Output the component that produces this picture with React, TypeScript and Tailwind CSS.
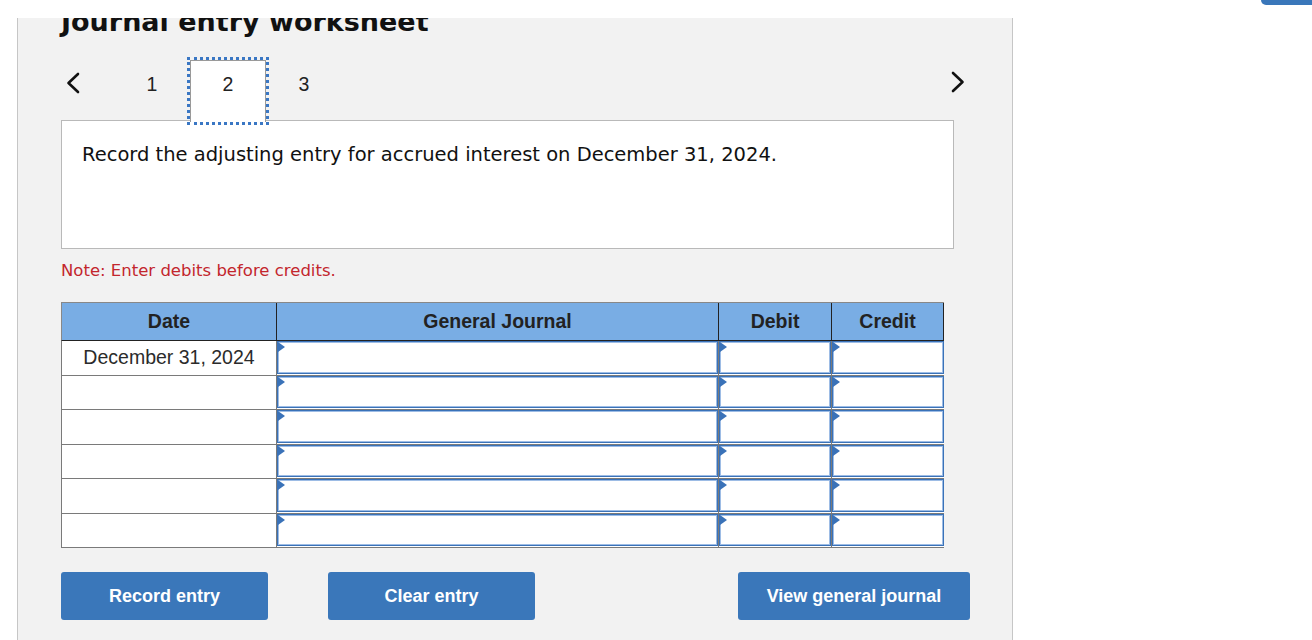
import React from 'react';

const rowHeights = ['h-[35px]', 'h-[34px]', 'h-[35px]', 'h-[34px]', 'h-[35px]', 'h-[34px]'];
const dates = ['December 31, 2024', '', '', '', '', ''];

function Chevron({ dir }: { dir: 'left' | 'right' }) {
  return (
    <svg width="14" height="22" viewBox="0 0 14 22" fill="none">
      <polyline
        points={dir === 'left' ? '12,2 2.5,11 12,20' : '2,2 11.5,11 2,20'}
        stroke="#111"
        strokeWidth="2.6"
        strokeLinecap="round"
        strokeLinejoin="round"
      />
    </svg>
  );
}

function EntryInput() {
  return (
    <div className="relative h-full w-full bg-white border border-[#3a72b8] shadow-[inset_0_0_0_1px_#9dbce5]">
      <div className="absolute top-0 left-0 w-0 h-0 border-y-[5px] border-y-transparent border-l-[7px] border-l-[#3a72b8]" />
    </div>
  );
}

export default function App() {
  return (
    <div className="h-[640px] w-[1312px] overflow-hidden bg-white flex items-start">
      <div className="pt-[18px] pl-[17px]">
        <div className="w-[996px] h-[700px] overflow-hidden bg-[#f2f2f2] border-x border-[#c6c6c6] pl-[43px]">
          <h2 className="-mt-[12px] h-[32px] leading-[32px] text-[27px] font-bold text-[#111] font-['DejaVu_Sans',sans-serif]">
            Journal entry worksheet
          </h2>

          {/* steps */}
          <div className="mt-[22px] flex items-start h-[62px] w-[904px] font-['Liberation_Sans',Arial,sans-serif] text-[19.5px] text-[#222]">
            <div className="w-[53px] pl-[5px] pt-[12px]">
              <Chevron dir="left" />
            </div>
            <div className="w-[76px] h-[62px] border border-transparent pt-[11px] text-center leading-[24px]">1</div>
            <div className="relative z-10 w-[76px] h-[62px] bg-white border-t border-x border-[#9a9a9a] outline-[3px] outline-dotted outline-[#3a77c4] pt-[11px] text-center leading-[24px]">
              2
            </div>
            <div className="w-[76px] h-[62px] border border-transparent pt-[11px] text-center leading-[24px]">3</div>
            <div className="flex-1" />
            <div className="pt-[11px]">
              <Chevron dir="right" />
            </div>
          </div>

          <div className="-mt-[2px] w-[893px] h-[129px] bg-white border border-[#b9b9b9] px-[20px] pt-[22px] font-['DejaVu_Sans',sans-serif] text-[19.5px] leading-[24px] text-[#111]">
            Record the adjusting entry for accrued interest on December 31, 2024.
          </div>

          <p className="mt-[12px] leading-[20px] text-[16.5px] text-[#c3262d] font-['DejaVu_Sans',sans-serif]">
            Note: Enter debits before credits.
          </p>

          {/* journal table */}
          <div className="mt-[21px] w-[883px] font-['Liberation_Sans',Arial,sans-serif]">
            <div className="flex h-[39px] bg-[#79ade4] border-t border-[#888] text-[19.5px] font-bold text-[#222]">
              <div className="w-[216px] border-l border-l-[#888] border-r border-b border-r-[#222] border-b-[#222] flex items-center justify-center">Date</div>
              <div className="w-[442px] border-r border-b border-[#222] flex items-center justify-center">General Journal</div>
              <div className="w-[113px] border-r border-b border-[#222] flex items-center justify-center">Debit</div>
              <div className="w-[112px] border-r border-b border-[#222] flex items-center justify-center">Credit</div>
            </div>
            {rowHeights.map((h, i) => (
              <div key={i} className={`flex ${h}`}>
                <div className="w-[216px] bg-white border-x border-b border-[#7a7a7a] flex items-center justify-center text-[19.5px] text-[#2b2b2b]">
                  {dates[i]}
                </div>
                <div className="w-[442px] bg-white border-r border-b border-[#7a7a7a] pb-px">
                  <EntryInput />
                </div>
                <div className="w-[113px] bg-white border-r border-b border-[#7a7a7a] pb-px">
                  <EntryInput />
                </div>
                <div className="w-[112px] bg-white border-b border-[#7a7a7a] pb-px">
                  <EntryInput />
                </div>
              </div>
            ))}
          </div>

          <div className="mt-[24px] flex font-['Liberation_Sans',Arial,sans-serif] text-[18px] font-bold text-white">
            <button className="w-[207px] h-[48px] rounded-[3px] bg-[#3a77ba]">Record entry</button>
            <button className="ml-[60px] w-[207px] h-[48px] rounded-[3px] bg-[#3a77ba]">Clear entry</button>
            <button className="ml-[203px] w-[232px] h-[48px] rounded-[3px] bg-[#3a77ba]">View general journal</button>
          </div>
        </div>
      </div>
      <div className="flex-1 flex justify-end">
        <div className="w-[51px] h-[5px] rounded-bl-[5px] bg-[#3a77ba]" />
      </div>
    </div>
  );
}
